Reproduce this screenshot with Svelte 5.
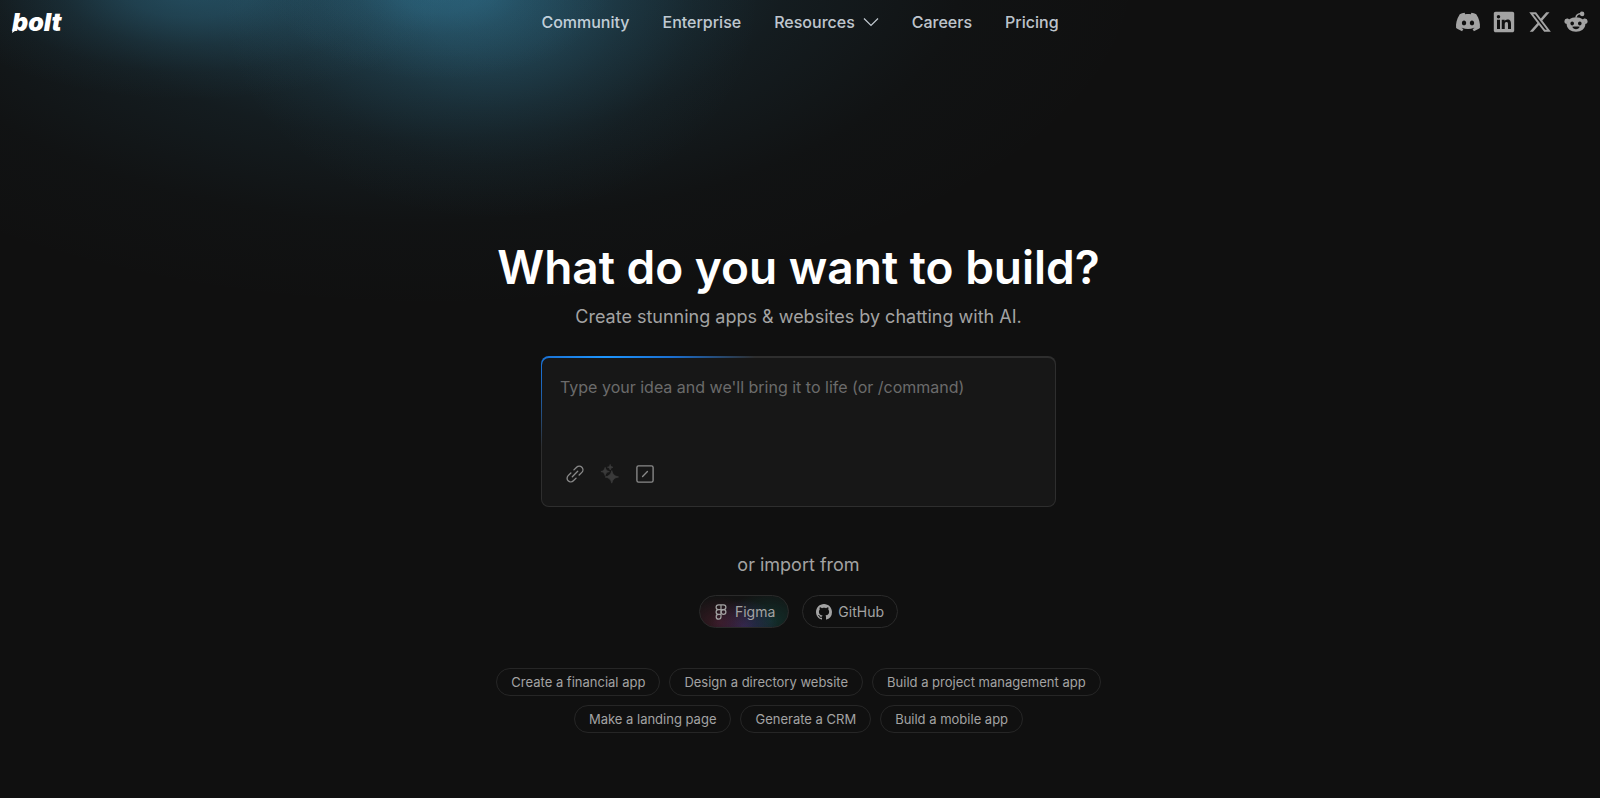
<script lang="ts">
	const navLinks = [
		{ label: 'Community', menu: false },
		{ label: 'Enterprise', menu: false },
		{ label: 'Resources', menu: true },
		{ label: 'Careers', menu: false },
		{ label: 'Pricing', menu: false }
	];

	const socials = [
		{
			name: 'Discord',
			paths: [
				'M20.317 4.3698a19.7913 19.7913 0 00-4.8851-1.5152.0741.0741 0 00-.0785.0371c-.211.3753-.4447.8648-.6083 1.2495-1.8447-.2762-3.68-.2762-5.4868 0-.1636-.3933-.4058-.8742-.6177-1.2495a.077.077 0 00-.0785-.037 19.7363 19.7363 0 00-4.8852 1.515.0699.0699 0 00-.0321.0277C.5334 9.0458-.319 13.5799.0992 18.0578a.0824.0824 0 00.0312.0561c2.0528 1.5076 4.0413 2.4228 5.9929 3.0294a.0777.0777 0 00.0842-.0276c.4616-.6304.8731-1.2952 1.226-1.9942a.076.076 0 00-.0416-.1057c-.6528-.2476-1.2743-.5495-1.8722-.8923a.077.077 0 01-.0076-.1277c.1258-.0943.2517-.1923.3718-.2914a.0743.0743 0 01.0776-.0105c3.9278 1.7933 8.18 1.7933 12.0614 0a.0739.0739 0 01.0785.0095c.1202.099.246.1981.3728.2924a.077.077 0 01-.0066.1276 12.2986 12.2986 0 01-1.873.8914.0766.0766 0 00-.0407.1067c.3604.698.7719 1.3628 1.225 1.9932a.076.076 0 00.0842.0286c1.961-.6067 3.9495-1.5219 6.0023-3.0294a.077.077 0 00.0313-.0552c.5004-5.177-.8382-9.6739-3.5485-13.6604a.061.061 0 00-.0312-.0286zM8.02 15.3312c-1.1825 0-2.1569-1.0857-2.1569-2.419 0-1.3332.9555-2.4189 2.157-2.4189 1.2108 0 2.1757 1.0952 2.1568 2.419 0 1.3332-.9555 2.4189-2.1569 2.4189zm7.9748 0c-1.1825 0-2.1569-1.0857-2.1569-2.419 0-1.3332.9554-2.4189 2.1569-2.4189 1.2108 0 2.1757 1.0952 2.1568 2.419 0 1.3332-.946 2.4189-2.1568 2.4189Z'
			]
		},
		{
			name: 'LinkedIn',
			paths: [
				'M20.4 1.800H3.600c-1 0-1.800.8-1.800 1.800v16.800c0 1 .8 1.800 1.800 1.800h16.800c1 0 1.800-.8 1.800-1.800V3.600c0-1-.8-1.800-1.800-1.800zM8 19H5V9.700h3V19zM6.500 8.400a1.750 1.750 0 110-3.500 1.750 1.750 0 010 3.500zM19 19h-3v-4.600c0-1.100 0-2.500-1.500-2.500s-1.750 1.200-1.750 2.400V19h-3V9.700h2.850v1.300c.4-.75 1.400-1.500 2.800-1.500 3 0 3.600 2 3.600 4.500V19z'
			]
		},
		{
			name: 'X',
			paths: [
				'M18.244 2.250h3.308l-7.227 8.260 8.502 11.240H16.170l-5.214-6.817L4.990 21.750H1.680l7.730-8.835L1.254 2.250H8.080l4.713 6.231zm-1.161 17.520h1.833L7.084 4.126H5.117z'
			]
		},
		{
			name: 'Reddit',
			paths: [
				'M12 7.300c5.200 0 9.300 3.200 9.300 7.300s-4.100 7.200-9.300 7.200-9.300-3.100-9.300-7.200S6.800 7.300 12 7.300zM8.200 11.600c-1 0-1.800.9-1.800 2s.8 1.800 1.800 1.800 1.800-.7 1.800-1.800-.8-2-1.800-2zm7.600 0c-1 0-1.800.9-1.800 2s.8 1.800 1.800 1.800 1.800-.7 1.800-1.800-.8-2-1.800-2zM8.300 16.700c.5 1.500 1.900 2.500 3.700 2.500s3.200-1 3.700-2.500c-2.400-.3-5-.3-7.400 0z',
				'M3 8.500c1.200 0 2.200.6 2.700 1.500-1.600 1.100-2.700 2.600-3.100 4.300A2.950 2.950 0 013 8.500z',
				'M21 8.500c-1.200 0-2.200.6-2.700 1.500 1.600 1.100 2.700 2.600 3.100 4.300A2.950 2.950 0 0021 8.500z',
				'M18.100 1.600a2.300 2.300 0 110 4.600 2.300 2.300 0 01-2.200-1.700c-1.900.2-3 1.300-3.100 3.100h-1.500c.1-2.700 1.800-4.500 4.600-4.700a2.300 2.300 0 012.200-1.300z'
			]
		}
	];

	const suggestions = [
		'Create a financial app',
		'Design a directory website',
		'Build a project management app',
		'Make a landing page',
		'Generate a CRM',
		'Build a mobile app'
	];

	let prompt = $state('');
</script>

<svelte:head>
	<title>bolt</title>
</svelte:head>

<div class="page">
	<header>
		<a class="logo" href="/">bolt</a>

		<nav>
			{#each navLinks as link}
				{#if link.menu}
					<button class="nav-item">
						{link.label}
						<svg width="16" height="16" viewBox="0 0 16 16" aria-hidden="true">
							<path d="M1 4.500l7 7 7-7" fill="none" stroke="currentColor" stroke-width="1.200" />
						</svg>
					</button>
				{:else}
					<a class="nav-item" href="/">{link.label}</a>
				{/if}
			{/each}
		</nav>

		<div class="socials">
			{#each socials as social}
				<a href="/" aria-label={social.name}>
					<svg width="24" height="24" viewBox="0 0 24 24" fill="currentColor" fill-rule="evenodd">
						{#each social.paths as d}
							<path {d} />
						{/each}
					</svg>
				</a>
			{/each}
		</div>
	</header>

	<main>
		<h1>What do you want to build?</h1>
		<p class="subtitle">Create stunning apps &amp; websites by chatting with AI.</p>

		<div class="prompt-border">
			<div class="prompt">
				<textarea
					bind:value={prompt}
					aria-label="Prompt"
					placeholder="Type your idea and we'll bring it to life (or /command)"
				></textarea>
				<div class="tools">
					<button aria-label="Attach link">
						<svg viewBox="0 0 20 20" fill="none" stroke="currentColor" stroke-width="1.500" stroke-linecap="round">
							<path d="M7 13l6-6" />
							<path d="M8.800 5.400l3-3a4.100 4.100 0 015.800 5.800l-3 3" />
							<path d="M11.200 14.600l-3 3a4.100 4.100 0 01-5.800-5.800l3-3" />
						</svg>
					</button>
					<button aria-label="Enhance prompt" disabled>
						<svg viewBox="0 0 20 20" fill="currentColor" stroke="currentColor" stroke-width=".8" stroke-linejoin="round">
							<path d="M12 6.200c1 4.400 2.800 6.100 7.500 7.100-4.700 1-6.500 2.600-7.500 6.900-1-4.300-2.800-5.900-7.500-6.900 4.700-1 6.500-2.700 7.500-7.100z" />
							<path d="M4.600 2.600c.7 2.900 1.800 4 4.700 4.700-2.900.7-4 1.700-4.700 4.600-.7-2.900-1.800-3.900-4.700-4.600 2.900-.7 4-1.800 4.700-4.700z" />
							<path d="M10.200-.6c.5 1.900 1.200 2.600 3.100 3.100-1.900.5-2.600 1.200-3.100 3.100-.5-1.900-1.200-2.600-3.100-3.100 1.900-.5 2.600-1.200 3.100-3.100z" />
						</svg>
					</button>
					<button aria-label="Commands">
						<svg viewBox="0 0 20 20" fill="none" stroke="currentColor" stroke-width="1.500" stroke-linecap="round">
							<rect x="1" y="1" width="18" height="18" rx="1.800" />
							<path d="M7.300 12.700l5.400-5.400" />
						</svg>
					</button>
				</div>
			</div>
		</div>

		<p class="import-label">or import from</p>
		<div class="imports">
			<button class="import figma">
				<svg width="16" height="16" viewBox="0 0 16 16" fill="none" stroke="currentColor" stroke-width="1.200">
					<path d="M8 .8H5.500a2.400 2.400 0 000 4.800H8zM8 .8h2.500a2.400 2.400 0 010 4.800H8zM8 5.600H5.500a2.400 2.400 0 000 4.800H8zM8 10.400H5.500A2.400 2.400 0 108 12.800z" />
					<circle cx="10.500" cy="8" r="2.400" />
				</svg>
				Figma
			</button>
			<button class="import">
				<svg width="16" height="16" viewBox="0 0 16 16" fill="currentColor">
					<path d="M8 0C3.580 0 0 3.580 0 8c0 3.540 2.290 6.530 5.470 7.590.4.07.55-.17.55-.38 0-.19-.01-.82-.01-1.490-2.010.37-2.530-.49-2.690-.94-.09-.23-.48-.94-.82-1.130-.28-.15-.68-.52-.01-.53.63-.01 1.080.58 1.230.82.72 1.210 1.870.87 2.330.66.07-.52.28-.87.51-1.070-1.780-.2-3.640-.89-3.640-3.950 0-.87.31-1.590.82-2.150-.08-.2-.36-1.020.08-2.120 0 0 .67-.21 2.200.82.64-.18 1.320-.27 2-.27s1.360.09 2 .27c1.530-1.040 2.200-.82 2.200-.82.44 1.100.16 1.920.08 2.120.51.56.82 1.270.82 2.150 0 3.070-1.870 3.750-3.650 3.950.29.25.54.73.54 1.480 0 1.070-.01 1.930-.01 2.200 0 .21.15.46.55.38A8.010 8.010 0 0016 8c0-4.420-3.580-8-8-8z" />
				</svg>
				GitHub
			</button>
		</div>

		<div class="suggestions">
			{#each suggestions as suggestion}
				<button onclick={() => (prompt = suggestion)}>{suggestion}</button>
			{/each}
		</div>
	</main>
</div>

<style>
	:global(body) {
		background: #101010;
	}

	.page {
		--glow: 60, 150, 190;
		min-height: 100vh;
		box-sizing: border-box;
		font-family: Inter, sans-serif;
		color: #a3a3a3;
		background:
			radial-gradient(ellipse 170px 90px at 440px -10px, rgba(var(--glow), 0.28), rgba(var(--glow), 0.23) 25%, rgba(var(--glow), 0.11) 50%, rgba(var(--glow), 0.04) 75%, transparent),
			radial-gradient(ellipse 270px 220px at 490px 0, rgba(var(--glow), 0.26), rgba(var(--glow), 0.2) 25%, rgba(var(--glow), 0.1) 50%, rgba(var(--glow), 0.03) 75%, transparent),
			radial-gradient(ellipse 260px 110px at 190px -10px, rgba(var(--glow), 0.33), rgba(var(--glow), 0.26) 25%, rgba(var(--glow), 0.13) 50%, rgba(var(--glow), 0.04) 75%, transparent),
			radial-gradient(ellipse 720px 340px at 430px -30px, rgba(var(--glow), 0.28), rgba(var(--glow), 0.22) 25%, rgba(var(--glow), 0.09) 50%, rgba(var(--glow), 0.02) 75%, transparent),
			#101010;
	}

	button {
		font: inherit;
		color: inherit;
		background: none;
		border: none;
		padding: 0;
		cursor: pointer;
	}

	a {
		color: inherit;
		text-decoration: none;
	}

	svg {
		display: block;
		flex: none;
		overflow: visible;
	}

	header {
		display: grid;
		grid-template-columns: 1fr auto 1fr;
		align-items: center;
		height: 44px;
		padding: 0 12px;
	}

	.logo {
		position: relative;
		justify-self: start;
		font-size: 25px;
		line-height: 32px;
		font-weight: 900;
		font-style: italic;
		color: #fff;
	}

	/* pointed tail under the b */
	.logo::before {
		content: '';
		position: absolute;
		left: 0;
		bottom: 5px;
		width: 5px;
		height: 5px;
		background: #fff;
		clip-path: polygon(20% 0, 100% 30%, 0 100%);
	}

	nav {
		display: flex;
		align-items: center;
		gap: 33px;
	}

	.nav-item {
		display: flex;
		align-items: center;
		gap: 8px;
		font-size: 16px;
		line-height: 24px;
		font-weight: 500;
		color: rgba(238, 246, 255, 0.8);
	}

	.socials {
		display: flex;
		justify-content: flex-end;
		align-items: center;
		gap: 12px;
	}

	main {
		display: flex;
		flex-direction: column;
		align-items: center;
		padding: 195px 3px 56px 0;
	}

	h1 {
		margin: 0;
		font-size: 46px;
		line-height: 56px;
		font-weight: 600;
		color: #fff;
	}

	.subtitle,
	.import-label {
		margin: 0;
		font-size: 18px;
		line-height: 28px;
	}

	.subtitle {
		margin-top: 8px;
	}

	.prompt-border {
		box-sizing: border-box;
		width: 100%;
		max-width: 515px;
		margin-top: 25px;
		padding: 2px 1px 1px;
		border-radius: 8px;
		background:
			radial-gradient(ellipse 150px 100px at 64px 0, #1e96ff, #1b6fd0 45%, rgba(27, 111, 208, 0)),
			#2e2e2e;
	}

	.prompt {
		padding: 17px 18px 18px;
		border-radius: 7px;
		background: #171717;
	}

	textarea {
		display: block;
		box-sizing: border-box;
		width: 100%;
		height: 85px;
		padding: 0;
		border: none;
		outline: none;
		resize: none;
		background: none;
		color: #fff;
		font: inherit;
		font-size: 16px;
		line-height: 24px;
	}

	textarea::placeholder {
		color: #6b6b6b;
		opacity: 1;
	}

	.tools {
		display: flex;
		gap: 7px;
		padding-left: 1px;
	}

	.tools button {
		padding: 5px;
		color: #8a8a8a;
	}

	.tools button:disabled {
		color: #3a3a3a;
		cursor: default;
	}

	.tools svg {
		width: 18px;
		height: 18px;
	}

	.import-label {
		margin-top: 44px;
	}

	.imports {
		display: flex;
		gap: 13px;
		margin-top: 16px;
	}

	.import {
		display: flex;
		align-items: center;
		gap: 6px;
		height: 33px;
		padding: 0 13px;
		border: 1px solid #2a2a2a;
		border-radius: 17px;
		font-size: 14px;
		line-height: 20px;
	}

	.figma {
		background:
			radial-gradient(ellipse 36px 26px at 22% 85%, rgba(100, 35, 55, 0.45), transparent),
			radial-gradient(ellipse 34px 28px at 50% 100%, rgba(65, 50, 125, 0.55), transparent),
			radial-gradient(ellipse 40px 32px at 80% 80%, rgba(15, 80, 70, 0.45), transparent),
			#131313;
	}

	.suggestions {
		display: flex;
		flex-wrap: wrap;
		justify-content: center;
		gap: 9px;
		max-width: 640px;
		margin-top: 40px;
	}

	.suggestions button {
		height: 28px;
		padding: 0 14px;
		border: 1px solid #262626;
		border-radius: 14px;
		font-size: 13px;
		line-height: 20px;
	}
</style>
